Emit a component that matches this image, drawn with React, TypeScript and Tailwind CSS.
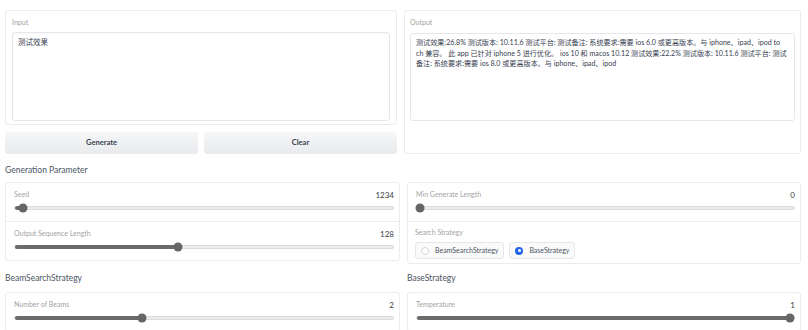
import React from "react"

const font = { fontFamily: 'Lato, "Noto Sans CJK SC", sans-serif' }

function Slider({ label, value, pct }: { label: string; value: string; pct: number }) {
  return (
    <div className="h-[38px] pl-[8px] pr-[5px] pt-[5px] flex flex-col">
      <div className="h-[12px] flex items-center justify-between">
        <span className="text-[7px] text-[#a3a3a3]">{label}</span>
        <span className="text-[8px] text-[#404040] mt-[2px]">{value}</span>
      </div>
      <div className="h-[10px] mt-[3px] flex items-center">
        <div className="relative w-full h-[4px] rounded-full bg-[#ececec] border border-[#dcdcdc]">
          <div className="absolute left-0 top-[-1px] bottom-[-1px] rounded-full bg-[#6b6b6b]" style={{ width: `${pct}%` }} />
          <div
            className="absolute top-1/2 w-[9px] h-[9px] rounded-full bg-[#666] -translate-x-1/2 -translate-y-1/2"
            style={{ left: `${pct}%` }}
          />
        </div>
      </div>
    </div>
  )
}

function Radio({ label, checked }: { label: string; checked?: boolean }) {
  return (
    <div className="h-[17px] flex items-center gap-[6px] px-[5px] border border-[#e5e7eb] rounded-[3px] bg-[#fafafa]">
      {checked ? (
        <span className="w-[8px] h-[8px] rounded-full bg-[#2563eb] flex items-center justify-center">
          <span className="w-[3px] h-[3px] rounded-full bg-white" />
        </span>
      ) : (
        <span className="w-[8px] h-[8px] rounded-full border border-[#d1d5db] bg-white" />
      )}
      <span className="text-[7px] text-[#4b5563]">{label}</span>
    </div>
  )
}

const outputLines = [
  "测试效果:26.8% 测试版本: 10.11.6 测试平台: 测试备注: 系统要求:需要 ios 6.0 或更高版本。与 iphone、ipad、ipod to",
  "ch 兼容。 此 app 已针对 iphone 5 进行优化。 ios 10 和 macos 10.12 测试效果:22.2% 测试版本: 10.11.6 测试平台: 测试",
  "备注: 系统要求:需要 ios 8.0 或更高版本。与 iphone、ipad、ipod",
]

export default function App() {
  return (
    <div className="w-[808px] h-[330px] overflow-hidden bg-white px-[5px] pt-[10px]" style={font}>
      {/* Top: input / output */}
      <div className="grid grid-cols-[392px_397px] gap-x-[7px]">
        <div className="flex flex-col gap-[7px]">
          <div className="h-[115px] border border-[#ececec] rounded-[3px] px-[6px] pt-[5px] flex flex-col">
            <span className="text-[7px] text-[#a3a3a3] h-[12px] leading-[12px]">Input</span>
            <div className="mt-[4px] h-[89px] border border-[#e5e7eb] rounded-[3px] px-[5px] pt-[5px] text-[7.5px] leading-[10px] text-[#374151] shadow-[inset_0_1px_2px_rgba(0,0,0,0.04)]">
              测试效果
            </div>
          </div>
          <div className="grid grid-cols-2 gap-[6px]">
            <button className="h-[22px] rounded-[3px] bg-gradient-to-b from-[#f6f7f8] to-[#e9eaed] text-[7.5px] font-bold text-[#374151]">
              Generate
            </button>
            <button className="h-[22px] rounded-[3px] bg-gradient-to-b from-[#f6f7f8] to-[#e9eaed] text-[7.5px] font-bold text-[#374151]">
              Clear
            </button>
          </div>
        </div>
        <div className="h-[144px] border border-[#ececec] rounded-[3px] px-[5px] pt-[5px] flex flex-col">
          <span className="text-[7px] text-[#a3a3a3] h-[12px] leading-[12px]">Output</span>
          <div className="mt-[5px] h-[88px] border border-[#e5e7eb] rounded-[3px] px-[5px] pt-[4px]">
            {outputLines.map((l) => (
              <div key={l} className="whitespace-nowrap text-[7.1px] leading-[10.5px] text-[#374151]">
                {l}
              </div>
            ))}
          </div>
        </div>
      </div>

      {/* Generation parameters */}
      <div className="mt-[5px] h-[23px] flex items-center text-[8.5px] text-[#4b5563]">Generation Parameter</div>
      <div className="grid grid-cols-[395px_394px] gap-x-[7px] items-start">
        <div className="border border-[#ececec] rounded-[3px]">
          <Slider label="Seed" value="1234" pct={2.1} />
          <div className="border-t border-[#ececec]">
            <Slider label="Output Sequence Length" value="128" pct={43.2} />
          </div>
        </div>
        <div className="border border-[#ececec] rounded-[3px]">
          <Slider label="Min Generate Length" value="0" pct={0.8} />
          <div className="border-t border-[#ececec] h-[42px] pl-[7px] pt-[4px] flex flex-col">
            <span className="text-[7px] text-[#a3a3a3] h-[12px] leading-[12px]">Search Strategy</span>
            <div className="mt-[4px] flex gap-[5px]">
              <Radio label="BeamSearchStrategy" />
              <Radio label="BaseStrategy" checked />
            </div>
          </div>
        </div>

        <div className="h-[28px] flex items-center text-[8.5px] text-[#4b5563]">BeamSearchStrategy</div>
        <div className="h-[28px] flex items-center text-[8.5px] text-[#4b5563]">BaseStrategy</div>

        <div className="border border-[#ececec] rounded-[3px]">
          <Slider label="Number of Beams" value="2" pct={33.7} />
        </div>
        <div className="border border-[#ececec] rounded-[3px]">
          <Slider label="Temperature" value="1" pct={99} />
        </div>
      </div>
    </div>
  )
}
